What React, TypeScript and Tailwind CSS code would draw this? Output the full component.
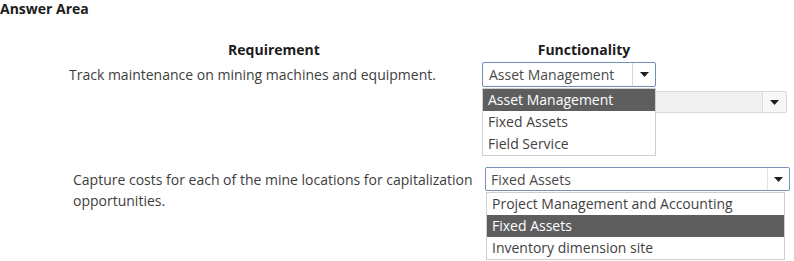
import React from 'react';

const Arrow = () => (
  <svg width="9" height="5" viewBox="0 0 9 5" className="block">
    <path d="M0 0 H9 L4.5 5 Z" fill="#1f1f1f" />
  </svg>
);

type Option = { label: string; active?: boolean };

const OptionList = ({ options, className }: { options: Option[]; className: string }) => (
  <div className={`absolute left-0 top-full z-10 border border-[#cfcfcf] bg-white ${className}`}>
    {options.map((o) => (
      <div
        key={o.label}
        className={`h-[22px] px-[5px] leading-[22px] ${o.active ? 'bg-[#5e5e5e] text-white' : 'text-[#3f3f3f]'}`}
      >
        {o.label}
      </div>
    ))}
  </div>
);

function App() {
  return (
    <div className="relative h-[261px] w-[794px] overflow-hidden bg-white font-['Open_Sans',sans-serif] text-[14px] text-[#3d3d3d]">
      <div className="font-bold leading-[17px] text-[#1c1c1c]">Answer Area</div>

      {/* column headers */}
      <div className="mt-[23px] flex font-bold leading-[19px] text-[#1c1c1c]">
        <div className="w-[482px] pl-[66px] text-center">Requirement</div>
        <div className="w-[204px] text-center">Functionality</div>
      </div>

      {/* row 1 */}
      <div className="mt-[3px] flex items-center">
        <div className="w-[482px] pl-[69px] leading-[20px]">Track maintenance on mining machines and equipment.</div>
        <div className="relative">
          <div className="flex h-[25px] w-[174px] items-center rounded-[2px] border border-[#6f8cba] bg-white">
            <div className="flex-1 px-[6px] text-[#4a4a4a]">Asset Management</div>
            <div className="flex h-full w-[23px] items-center justify-center border-l border-[#d6d6d6]">
              <Arrow />
            </div>
          </div>
          <OptionList
            className="mt-[1px] w-[174px]"
            options={[{ label: 'Asset Management', active: true }, { label: 'Fixed Assets' }, { label: 'Field Service' }]}
          />
        </div>
      </div>

      {/* inactive select partly hidden */}
      <div className="ml-[482px] mt-[4px] flex h-[22px] w-[305px] items-center rounded-[2px] border border-[#d9d9d9] bg-[#f1f1f1]">
        <div className="flex-1" />
        <div className="flex h-full w-[24px] items-center justify-center border-l border-[#dcdcdc] bg-[#f7f7f7]">
          <Arrow />
        </div>
      </div>

      {/* row 2 */}
      <div className="mt-[54px] flex items-start">
        <div className="w-[485px] pl-[73px] pt-[2px] leading-[21px]">
          Capture costs for each of the mine locations for capitalization
          <br />
          opportunities.
        </div>
        <div className="relative">
          <div className="flex h-[24px] w-[305px] items-center rounded-[2px] border border-[#7b90b6] bg-white">
            <div className="flex-1 px-[5px] text-[#4a4a4a]">Fixed Assets</div>
            <div className="flex h-full w-[22px] items-center justify-center border-l border-[#e0e0e0]">
              <Arrow />
            </div>
          </div>
          <OptionList
            className="ml-[1px] mt-[1px] w-[299px]"
            options={[
              { label: 'Project Management and Accounting' },
              { label: 'Fixed Assets', active: true },
              { label: 'Inventory dimension site' },
            ]}
          />
        </div>
      </div>
    </div>
  );
}

export default App;
